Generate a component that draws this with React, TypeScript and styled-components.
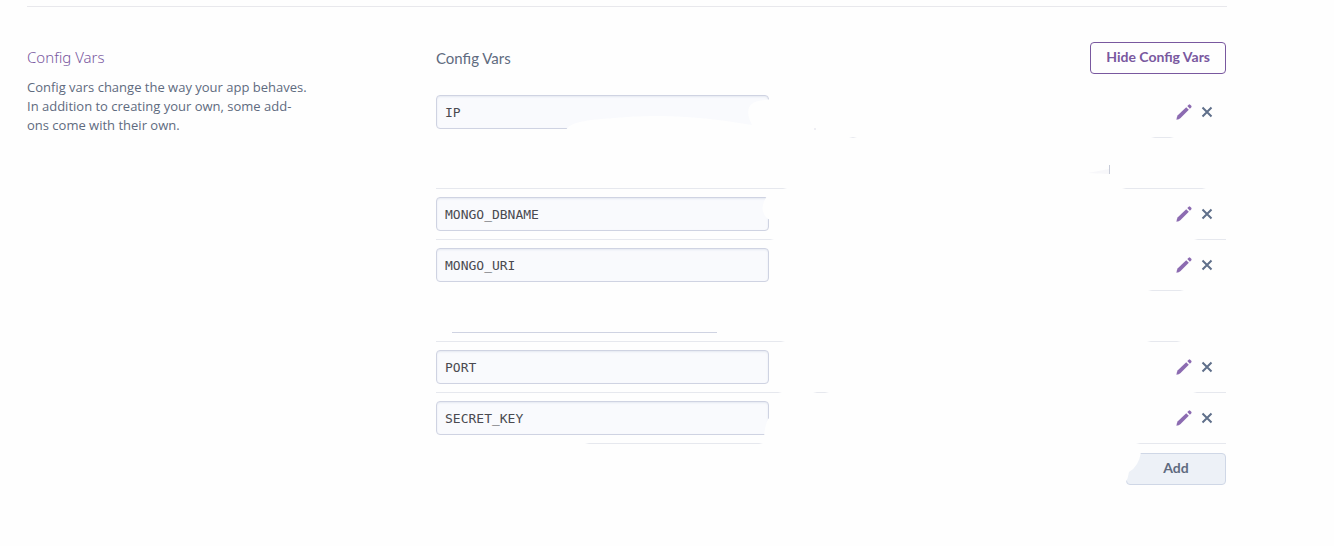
import React from "react";
import styled, { createGlobalStyle } from "styled-components";

const GlobalStyle = createGlobalStyle`
  *, *::before, *::after { box-sizing: border-box; }
  body {
    margin: 0;
    background: #fefefe;
    color: #5f6b7f;
    font: 13px/19px "Open Sans", sans-serif;
  }
`;

const Page = styled.main`
  max-width: 1227px;
  padding: 6px 0 0 27px;
`;

const Section = styled.section`
  display: grid;
  grid-template-columns: 409fr 790fr;
  padding: 35px 1px 0 0;
  border-top: 1px solid #e8e8ec;
`;

const Intro = styled.div`
  max-width: 286px;
  padding-top: 5px;
`;

const Title = styled.h2`
  margin: 0 0 11px;
  color: #79589f;
  font-family: "Noto Sans", sans-serif;
  font-size: 15px;
  font-weight: 300;
  line-height: 20px;
`;

const Description = styled.p`
  margin: 0;
`;

const Header = styled.header`
  display: flex;
  align-items: center;
  justify-content: space-between;
  margin-bottom: 13px;
`;

const Subtitle = styled.h3`
  margin: 0;
  font-family: Lato, sans-serif;
  font-size: 15px;
  font-weight: 400;
  line-height: 20px;
`;

const Button = styled.button<{ $primary?: boolean }>`
  height: 32px;
  padding: 0 15px 2px;
  border: 1px solid ${(p) => (p.$primary ? "#79589f" : "#cfd7e6")};
  border-radius: 4px;
  background: ${(p) => (p.$primary ? "#fefefe" : "#edf1f7")};
  color: ${(p) => (p.$primary ? "#79589f" : "#5f6b7f")};
  font: 700 14px/20px Lato, sans-serif;
`;

const List = styled.ul`
  margin: 0;
  padding: 0;
  list-style: none;
`;

const Row = styled.li<{ $rule: string }>`
  position: relative;
  display: flex;
  align-items: center;
  justify-content: space-between;
  height: 51px;
  padding: 8px 13px 9px 0;
  background: linear-gradient(to right, ${(p) => p.$rule}) bottom / 100% 1px no-repeat;
`;

const KeyInput = styled.input`
  width: 333px;
  height: 34px;
  padding: 0 8px;
  border: 1px solid #cfd3e2;
  border-radius: 4px;
  background: #f9fafd;
  box-shadow: inset 0 1px 2px #e4e8f1;
  color: #4a4a50;
  font: 13px/20px "DejaVu Sans Mono", monospace;
`;

const Actions = styled.div`
  display: flex;
  gap: 9px;
`;

const IconButton = styled.button`
  display: flex;
  align-items: center;
  padding: 0;
  border: 0;
  background: none;
`;

const Overlay = styled.svg`
  position: absolute;
  top: 0;
  left: 0;
  pointer-events: none;
`;

const Footer = styled.footer`
  position: relative;
  display: flex;
  justify-content: flex-end;
  padding-top: 9px;
`;

const AddButton = styled(Button)`
  width: 100px;
`;

const Bite = styled.svg`
  position: absolute;
  right: 84px;
  bottom: 0;
  pointer-events: none;
`;

const line = "#e6e8ee";

/* Colour stops for a row's rule, drawn only along the given [from, to] spans. */
const spans = (...parts: [number, number][]) =>
  ["transparent 0"]
    .concat(
      parts.map(
        ([a, b]) =>
          `transparent ${a}px, ${line} ${a === 0 ? 0 : a + 4}px, ${line} ${b === 790 ? b : b - 4}px, transparent ${b}px`
      )
    )
    .join(", ");

const Pencil = () => (
  <svg width="16" height="16" viewBox="0 0 16 16" fill="#8c6bb1" aria-hidden="true">
    <path d="M0.4 15.7 Q0.5 13 1.8 11.2 L10.2 3.2 L12.8 5.8 L4.6 13.9 Q3 15.4 0.4 15.7 Z" />
    <path d="M11.3 2.1 L12.7 0.8 Q13.4 0 14.2 0.7 L15.3 1.8 Q16 2.7 15.2 3.4 L13.9 4.7 Z" />
  </svg>
);

const Cross = () => (
  <svg width="12" height="12" viewBox="0 0 12 12" fill="none" stroke="#5f6f8a" strokeWidth="2" aria-hidden="true">
    <path d="M1.5 1.5 L10.5 10.5 M10.5 1.5 L1.5 10.5" />
  </svg>
);

type Item = { id: string; name?: string; rule: string; marks?: React.ReactNode };

const items: Item[] = [
  {
    id: "ip",
    name: "IP",
    rule: spans([413, 421], [715, 738]),
    marks: (
      <g fill="#fefefe">
        <path d="M130 43 C134 35 150 33 178 31 Q230 26 290 34 L316 38 Q306 18 322 14 L335 12 V45 H130 Z" />
        <rect x="378" y="41" width="2" height="2" fill="#eeeef3" />
      </g>
    ),
  },
  {
    id: "blank-1",
    rule: spans([0, 351], [686, 770]),
    marks: (
      <>
        <path d="M652 35 L673 31 V36 Z" fill="#f7f7fa" />
        <path d="M673.5 27 V36" stroke="#c8ccd8" />
      </>
    ),
  },
  {
    id: "dbname",
    name: "MONGO_DBNAME",
    rule: spans([0, 338], [758, 790]),
    marks: <path d="M331 7 Q324 18 328 25 Q330 30 335 31 V7 Z" fill="#fefefe" />,
  },
  { id: "uri", name: "MONGO_URI", rule: spans([712, 748]) },
  {
    id: "blank-2",
    rule: spans([0, 349], [711, 745]),
    marks: <path d="M16 41.5 H281" stroke="#cfd3e2" />,
  },
  { id: "port", name: "PORT", rule: spans([0, 346], [377, 393], [757, 790]) },
  {
    id: "secret",
    name: "SECRET_KEY",
    rule: spans([149, 327], [700, 790]),
    marks: <path d="M335 24 L332 26 Q329 32 328 44 H335 Z" fill="#fefefe" />,
  },
];

export default function App() {
  return (
    <>
      <GlobalStyle />
      <Page>
        <Section>
          <Intro>
            <Title>Config Vars</Title>
            <Description>
              Config vars change the way your app behaves. In addition to creating your own, some
              add-ons come with their own.
            </Description>
          </Intro>
          <div>
            <Header>
              <Subtitle>Config Vars</Subtitle>
              <Button type="button" $primary>
                Hide Config Vars
              </Button>
            </Header>
            <List>
              {items.map((item) => (
                <Row key={item.id} $rule={item.rule}>
                  {item.name && (
                    <>
                      <KeyInput aria-label={`${item.name} key`} defaultValue={item.name} />
                      <Actions>
                        <IconButton type="button" aria-label={`Edit ${item.name}`}>
                          <Pencil />
                        </IconButton>
                        <IconButton type="button" aria-label={`Remove ${item.name}`}>
                          <Cross />
                        </IconButton>
                      </Actions>
                    </>
                  )}
                  {item.marks && (
                    <Overlay width="790" height="50" aria-hidden="true">
                      {item.marks}
                    </Overlay>
                  )}
                </Row>
              ))}
            </List>
            <Footer>
              <AddButton type="button">Add</AddButton>
              <Bite width="17" height="33" aria-hidden="true">
                <path d="M0 0 H16 Q14 14 4 20 Q3 26 1 30 L0 31 Z" fill="#fefefe" />
              </Bite>
            </Footer>
          </div>
        </Section>
      </Page>
    </>
  );
}
